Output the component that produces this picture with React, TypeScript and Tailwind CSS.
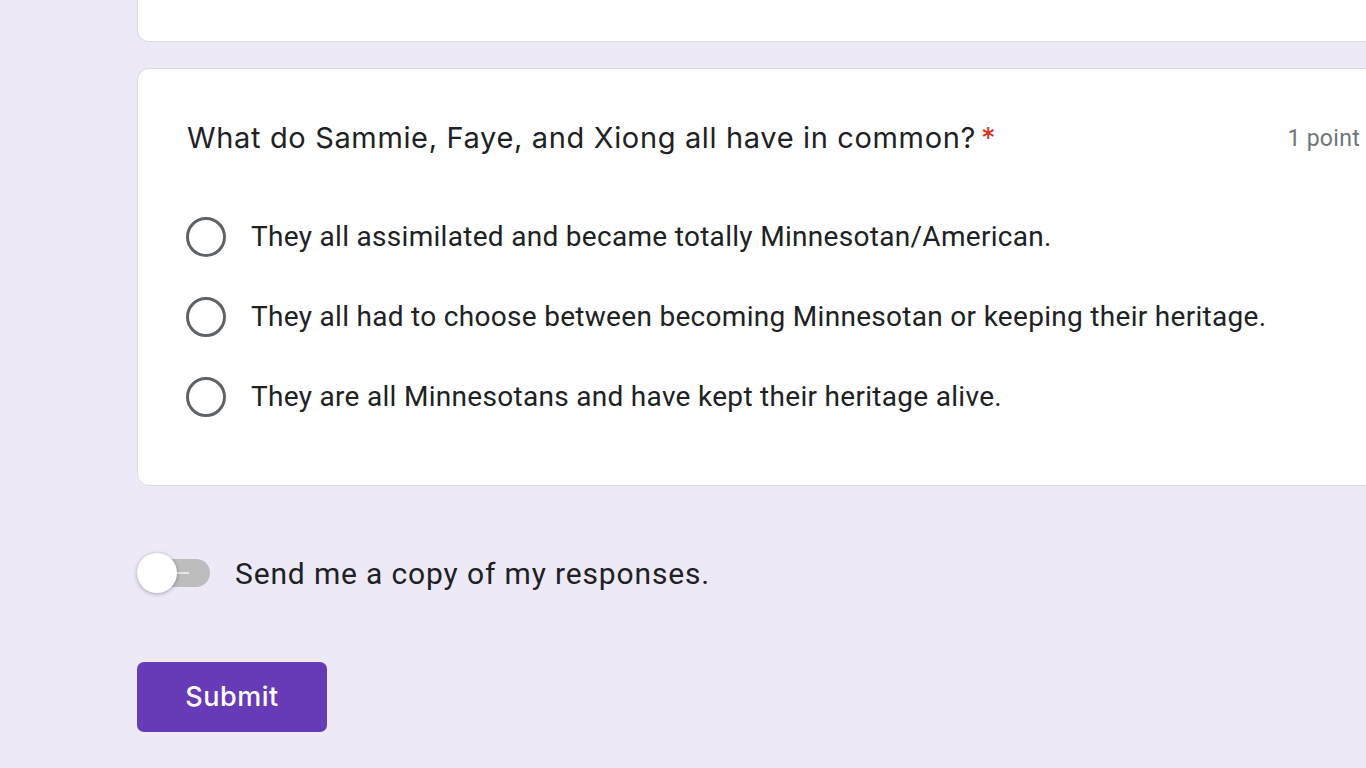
import { useState } from 'react';

const options = [
  'They all assimilated and became totally Minnesotan/American.',
  'They all had to choose between becoming Minnesotan or keeping their heritage.',
  'They are all Minnesotans and have kept their heritage alive.',
];

function Radio({ label }: { label: string }) {
  return (
    <label className="flex items-center h-[80px] cursor-pointer">
      <span className="-ml-[1px] w-[40px] h-[40px] rounded-full border-[3px] border-[#5f6368] shrink-0" />
      <span className="ml-[25px] text-[28px] tracking-[0.3px] text-[#202124] font-['Roboto',sans-serif]">
        {label}
      </span>
    </label>
  );
}

export default function App() {
  const [copy, setCopy] = useState(false);

  return (
    <div className="h-screen w-full overflow-hidden bg-[#eee9f7] pl-[137px]">
      <div className="w-[1300px] h-[42px] bg-white border border-t-0 border-[#dadce0] rounded-b-[12px]" />

      <div className="mt-[26px] w-[1300px] h-[418px] bg-white border border-[#dadce0] rounded-[12px] pt-[50px] pl-[49px]">
        <div className="flex items-center justify-between h-[40px] w-[1173px]">
          <h2 className="-mt-[2px] text-[29px] tracking-[0.65px] text-[#202124] font-['Inter',sans-serif]">
            What do Sammie, Faye, and Xiong all have in common?
            <span className="text-[#d93025] ml-[5px]">*</span>
          </h2>
          <span className="text-[23px] tracking-[0.3px] text-[#70757a] font-['Roboto',sans-serif]">1 point</span>
        </div>

        <div className="mt-[38px] flex flex-col">
          {options.map((o) => (
            <Radio key={o} label={o} />
          ))}
        </div>
      </div>

      <div className="mt-[67px] flex items-center h-[40px]">
        <button
          onClick={() => setCopy(!copy)}
          className="relative w-[73px] h-[40px] flex items-center"
        >
          <span className="block w-[73px] h-[28px] rounded-full bg-[#bdbdbd]" />
          <span className="absolute left-[38px] top-[19px] w-[14px] h-[2px] bg-[#e8e8e8]" />
          <span className="absolute left-0 top-0 w-[40px] h-[40px] rounded-full bg-white shadow-[0_1px_4px_rgba(0,0,0,0.3)]" />
        </button>
        <span className="ml-[25px] text-[30px] text-[#202124] font-['Roboto',sans-serif] tracking-[0.85px]">
          Send me a copy of my responses.
        </span>
      </div>

      <button className="mt-[69px] w-[190px] h-[70px] rounded-[7px] bg-[#673ab7] text-white text-[27px] tracking-[0.5px] font-medium font-['Inter',sans-serif]">
        Submit
      </button>
    </div>
  );
}
